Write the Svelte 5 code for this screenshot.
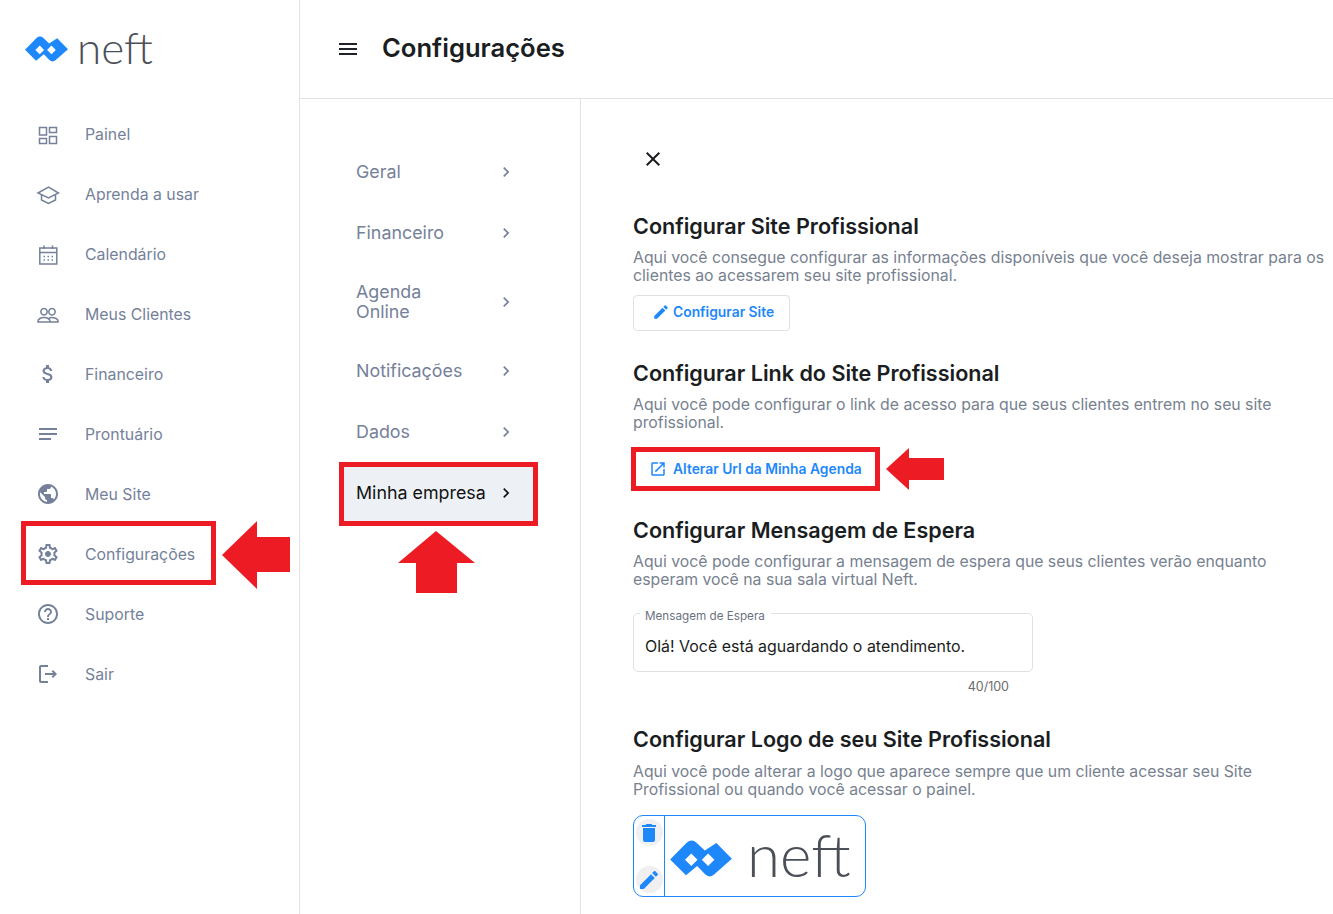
<script lang="ts">
  const logoPath =
    "M0 59 L50 8 Q65 -5 80 8 L105 32 L140 9 L187 57 L135 103 Q120 118 105 103 L82 79 L48 107 Z M45 60 L64 41 L83 60 L64 79 Z M96 60 L115 41 L134 60 L115 79 Z";

  const edit = "M3 17.25V21h3.75L17.81 9.94l-3.75-3.75L3 17.25zM20.71 7.04c.39-.39.39-1.02 0-1.41l-2.34-2.34c-.39-.39-1.02-.39-1.41 0l-1.83 1.83 3.75 3.75 1.83-1.83z";
  const chevron = "M8.59 16.59L13.17 12 8.59 7.41 10 6l6 6-6 6z";

  const menu = [
    { label: "Painel", line: "M3.500 5.500h7v7.500h-7z M13.500 5.500h7v5h-7z M3.500 16.500h7v5h-7z M13.500 14.500h7v7h-7z" },
    { label: "Aprenda a usar", line: "M2 11 L12.500 5 L22.500 11 L12.500 16 Z M5.500 13 V18 L12.500 21.500 L19.500 18 V13" },
    { label: "Calendário", line: "M3.800 6h17v16h-17z M3.800 10.500h17 M8 3.500v3.500 M16.500 3.500v3.500 M7.500 14.500h1.500 M11.500 14.500h1.500 M15.500 14.500h1.500 M7.500 18h1.500 M11.500 18h1.500 M15.500 18h1.500" },
    { label: "Meus Clientes", line: "M8 6.500a3.200 3.200 0 1 0 .01 0z M16 6.500a3.200 3.200 0 1 0 .01 0z M2 20v-1c0-2 3-3.500 6-3.500s6 1.500 6 3.500v1z M13 16c3.500-1.200 9 .3 9 3v1h-8" },
    { label: "Financeiro", d: "M11.8 10.9c-2.27-.59-3-1.2-3-2.15 0-1.09 1.01-1.85 2.7-1.85 1.78 0 2.44.85 2.5 2.1h2.21c-.07-1.72-1.12-3.3-3.21-3.81V3h-3v2.16c-1.94.42-3.5 1.68-3.5 3.61 0 2.31 1.91 3.46 4.7 4.13 2.5.6 3 1.48 3 2.41 0 .69-.49 1.79-2.7 1.79-2.06 0-2.87-.92-2.98-2.1h-2.2c.12 2.19 1.76 3.42 3.68 3.83V21h3v-2.15c1.95-.37 3.5-1.5 3.5-3.55 0-2.84-2.43-3.81-4.7-4.4z" },
    { label: "Prontuário", d: "M21 11.01L3 11v2h18zM3 16h12v2H3zM21 6H3v2.01L21 8z" },
    { label: "Meu Site", d: "M12 2C6.48 2 2 6.48 2 12s4.48 10 10 10 10-4.48 10-10S17.52 2 12 2zm-1 17.93c-3.95-.49-7-3.85-7-7.93 0-.62.08-1.21.21-1.79L9 15v1c0 1.1.9 2 2 2v1.93zm6.9-2.54c-.26-.81-1-1.39-1.9-1.39h-1v-3c0-.55-.45-1-1-1H8v-2h2c.55 0 1-.45 1-1V7h2c1.1 0 2-.9 2-2v-.41c2.93 1.19 5 4.06 5 7.41 0 2.08-.8 3.97-2.1 5.39z" },
    { label: "Configurações", marked: true, d: "M19.43 12.98c.04-.32.07-.64.07-.98 0-.34-.03-.66-.07-.98l2.11-1.65c.19-.15.24-.42.12-.64l-2-3.46c-.09-.16-.26-.25-.44-.25-.06 0-.12.01-.17.03l-2.49 1c-.52-.4-1.08-.73-1.69-.98l-.38-2.65C14.46 2.18 14.25 2 14 2h-4c-.25 0-.46.18-.49.42l-.38 2.65c-.61.25-1.17.59-1.69.98l-2.49-1c-.06-.02-.12-.03-.18-.03-.17 0-.34.09-.43.25l-2 3.46c-.13.22-.07.49.12.64l2.11 1.65c-.04.32-.07.65-.07.98 0 .33.03.66.07.98l-2.11 1.65c-.19.15-.24.42-.12.64l2 3.46c.09.16.26.25.44.25.06 0 .12-.01.17-.03l2.49-1c.52.4 1.08.73 1.69.98l.38 2.65c.03.24.24.42.49.42h4c.25 0 .46-.18.49-.42l.38-2.65c.61-.25 1.17-.59 1.69-.98l2.49 1c.06.02.12.03.18.03.17 0 .34-.09.43-.25l2-3.46c.12-.22.07-.49-.12-.64l-2.11-1.65zm-1.98-1.71c.04.31.05.52.05.73 0 .21-.02.43-.05.73l-.14 1.13.89.7 1.08.84-.7 1.21-1.27-.51-1.04-.42-.9.68c-.43.32-.84.56-1.25.73l-1.06.43-.16 1.13-.2 1.35h-1.4l-.19-1.35-.16-1.13-1.06-.43c-.43-.18-.83-.41-1.23-.71l-.91-.7-1.06.43-1.27.51-.7-1.21 1.08-.84.89-.7-.14-1.13c-.03-.31-.05-.54-.05-.74s.02-.43.05-.73l.14-1.13-.89-.7-1.08-.84.7-1.21 1.27.51 1.04.42.9-.68c.43-.32.84-.56 1.25-.73l1.06-.43.16-1.13.2-1.35h1.39l.19 1.35.16 1.13 1.06.43c.43.18.83.41 1.23.71l.91.7 1.06-.43 1.27-.51.7 1.21-1.07.85-.89.7.14 1.13zM12 9c-1.660 0-3 1.340-3 3s1.340 3 3 3 3-1.340 3-3-1.340-3-3-3z" },
    { label: "Suporte", d: "M11 18h2v-2h-2v2zm1-16C6.48 2 2 6.48 2 12s4.48 10 10 10 10-4.48 10-10S17.52 2 12 2zm0 18c-4.41 0-8-3.59-8-8s3.59-8 8-8 8 3.59 8 8-3.59 8-8 8zm0-14c-2.21 0-4 1.79-4 4h2c0-1.1.9-2 2-2s2 .9 2 2c0 2-3 1.75-3 5h2c0-2.25 3-2.5 3-5 0-2.21-1.79-4-4-4z" },
    { label: "Sair", d: "M17 8l-1.41 1.41L17.17 11H9v2h8.17l-1.58 1.58L17 16l4-4-4-4zM5 5h7V3H5c-1.1 0-2 .9-2 2v14c0 1.1.9 2 2 2h7v-2H5V5z" }
  ];

  const tabs = [
    { label: "Geral" },
    { label: "Financeiro" },
    { label: "Agenda Online", two: true },
    { label: "Notificações" },
    { label: "Dados" },
    { label: "Minha empresa", active: true }
  ];
</script>

<div class="page">
  <aside class="sidebar">
    <div class="brand">
      <svg class="mark" viewBox="0 0 187 112"><path fill-rule="evenodd" d={logoPath} /></svg>
      <span class="wordmark">neft</span>
    </div>
    <nav class="menu">
      {#each menu as item}
        <div class="menu-item" class:boxed={item.marked}>
          <svg class="icon" viewBox="0 0 24 24">
            {#if item.line}
              <path class="stroked" d={item.line} />
            {:else}
              <path d={item.d} />
            {/if}
          </svg>
          <span>{item.label}</span>
          {#if item.marked}
            <svg class="arrow arrow-menu" viewBox="0 0 68 68"><path d="M0 34 L35 0 V16 H68 V51 H35 V68 Z" /></svg>
          {/if}
        </div>
      {/each}
    </nav>
  </aside>

  <div class="main">
    <header class="topbar">
      <svg class="burger" viewBox="0 0 24 24"><path d="M3 18h18v-2H3v2zm0-5h18v-2H3v2zm0-7v2h18V6H3z" /></svg>
      <h1>Configurações</h1>
    </header>

    <div class="columns">
      <nav class="tabs">
        {#each tabs as tab}
          <div class="tab" class:two={tab.two} class:active={tab.active}>
            <span>{tab.label}</span>
            <svg class="chevron" viewBox="0 0 24 24"><path d={chevron} /></svg>
            {#if tab.active}
              <svg class="arrow arrow-tab" viewBox="0 0 77 62"><path d="M38 0 L77 32 H59 V62 H18 V32 H0 Z" /></svg>
            {/if}
          </div>
        {/each}
      </nav>

      <section class="content">
        <svg class="close" viewBox="0 0 24 24"><path d="M19 6.410L17.590 5 12 10.590 6.410 5 5 6.410 10.590 12 5 17.590 6.410 19 12 13.410 17.590 19 19 17.590 13.410 12z" /></svg>

        <h2 class="first">Configurar Site Profissional</h2>
        <p>Aqui você consegue configurar as informações disponíveis que você deseja mostrar para os clientes ao acessarem seu site profissional.</p>
        <button class="btn outlined">
          <svg viewBox="0 0 24 24"><path d={edit} /></svg>
          Configurar Site
        </button>

        <h2>Configurar Link do Site Profissional</h2>
        <p>Aqui você pode configurar o link de acesso para que seus clientes entrem no seu site profissional.</p>
        <button class="btn boxed link">
          <svg viewBox="0 0 24 24"><path d="M19 19H5V5h7V3H5c-1.110 0-2 .9-2 2v14c0 1.100.89 2 2 2h14c1.100 0 2-.9 2-2v-7h-2v7zM14 3v2h3.590l-9.830 9.830 1.410 1.410L19 6.410V10h2V3h-7z" /></svg>
          Alterar Url da Minha Agenda
          <svg class="arrow arrow-link" viewBox="0 0 58 42"><path d="M0 21 L23 0 V10 H58 V32 H23 V42 Z" /></svg>
        </button>

        <h2 class="after-link">Configurar Mensagem de Espera</h2>
        <p>Aqui você pode configurar a mensagem de espera que seus clientes verão enquanto esperam você na sua sala virtual Neft.</p>
        <fieldset class="field">
          <legend>Mensagem de Espera</legend>
          <span>Olá! Você está aguardando o atendimento.</span>
        </fieldset>
        <div class="counter">40/100</div>

        <h2 class="after-field">Configurar Logo de seu Site Profissional</h2>
        <p class="logo-text">Aqui você pode alterar a logo que aparece sempre que um cliente acessar seu Site Profissional ou quando você acessar o painel.</p>
        <div class="logo-box">
          <div class="logo-tools">
            <span class="round"><svg viewBox="0 0 24 24"><path d="M6 19c0 1.100.9 2 2 2h8c1.100 0 2-.9 2-2V7H6v12zM19 4h-3.500l-1-1h-5l-1 1H5v2h14V4z" /></svg></span>
            <span class="round"><svg viewBox="0 0 24 24"><path d={edit} /></svg></span>
          </div>
          <div class="logo-preview">
            <svg class="mark" viewBox="0 0 187 112"><path fill-rule="evenodd" d={logoPath} /></svg>
            <span class="wordmark">neft</span>
          </div>
        </div>
      </section>
    </div>
  </div>
</div>

<style>
  :global(body) {
    margin: 0;
    background: #fff;
    font-family: Inter, "Liberation Sans", sans-serif;
  }
  .page {
    display: flex;
    width: 1333px;
    height: 914px;
    overflow: hidden;
  }
  .sidebar {
    width: 299px;
    flex: none;
    border-right: 1px solid #e1e3e6;
  }
  .brand {
    display: flex;
    align-items: center;
    height: 104px;
    padding: 0 0 6px 25px;
    box-sizing: border-box;
  }
  .mark {
    width: 43px;
    height: 26px;
    fill: #1e88fb;
    flex: none;
  }
  .wordmark {
    font-family: Lato, sans-serif;
    font-weight: 300;
    font-size: 44px;
    line-height: 44px;
    color: #4b5058;
    margin: 0 0 4px 9px;
  }
  .menu {
    padding-left: 26px;
  }
  .menu-item {
    position: relative;
    display: flex;
    align-items: center;
    gap: 25px;
    width: 185px;
    height: 60px;
    padding-left: 10px;
    box-sizing: border-box;
    font-size: 15.85px;
    color: #75819a;
  }
  .icon {
    width: 24px;
    height: 24px;
    flex: none;
    fill: #75819a;
  }
  .stroked {
    fill: none;
    stroke: #75819a;
    stroke-width: 1.5;
  }
  .menu-item.boxed::after {
    content: "";
    position: absolute;
    inset: -3px -5px -1px;
    border: 5px solid #ed1c24;
  }
  .arrow {
    position: absolute;
    fill: #ed1c24;
  }
  .arrow-menu {
    left: 196px;
    top: -3px;
    width: 68px;
    height: 68px;
  }
  .main {
    flex: 1;
    min-width: 0;
  }
  .topbar {
    display: flex;
    align-items: center;
    gap: 22px;
    height: 98px;
    padding-left: 36px;
    border-bottom: 1px solid #e1e3e6;
  }
  .burger {
    width: 24px;
    height: 24px;
    fill: #1f2329;
  }
  h1 {
    margin: 0 0 4px;
    font-size: 25.6px;
    font-weight: 600;
    color: #1a1d21;
  }
  .columns {
    display: flex;
    height: 815px;
  }
  .tabs {
    width: 281px;
    flex: none;
    box-sizing: border-box;
    padding: 43px 47px 0 44px;
    border-right: 1px solid #e1e3e6;
  }
  .tab {
    position: relative;
    display: flex;
    align-items: center;
    justify-content: space-between;
    padding: 20px 17px 20px 12px;
    margin-bottom: 1px;
    font-size: 17.85px;
    line-height: 20px;
    color: #75819a;
  }
  .chevron {
    width: 20px;
    height: 20px;
    fill: #75819a;
    flex: none;
  }
  .tab.two {
    padding-top: 18px;
    padding-bottom: 18px;
  }
  .tab.two span {
    width: 80px;
  }
  .tab.active {
    background: #edf1f5;
    color: #111;
  }
  .tab.active .chevron {
    fill: #111;
  }
  .tab.active::after {
    content: "";
    position: absolute;
    inset: -1px -5px -3px;
    border: 5px solid #ed1c24;
  }
  .arrow-tab {
    left: 54px;
    top: 68px;
    width: 77px;
    height: 62px;
  }
  .content {
    flex: 1;
    min-width: 0;
    padding-left: 52px;
  }
  .close {
    display: block;
    width: 24px;
    height: 24px;
    margin: 48px 0 0 8px;
    fill: #1a1d21;
  }
  h2 {
    margin: 28px 0 0;
    font-size: 21.55px;
    line-height: 28px;
    font-weight: 600;
    color: #1a1d21;
  }
  h2.first {
    margin-top: 41px;
  }
  h2.after-link {
    margin-top: 30px;
  }
  h2.after-field {
    margin-top: 31px;
  }
  p {
    margin: 9px 0 0;
    font-size: 15.8px;
    line-height: 18px;
    color: #77818f;
  }
  p.logo-text {
    margin-top: 10px;
  }
  .btn {
    position: relative;
    display: flex;
    align-items: center;
    gap: 3px;
    margin-top: 10px;
    height: 36px;
    background: #fff;
    font-family: inherit;
    font-size: 13.85px;
    font-weight: 600;
    color: #1e88fb;
    padding: 0;
  }
  .btn svg {
    width: 18px;
    height: 18px;
    fill: #1e88fb;
    flex: none;
  }
  .outlined {
    width: 157px;
    padding: 0 0 3px 18px;
    border: 1px solid #dfe1e4;
    border-radius: 4px;
  }
  .link {
    width: 239px;
    margin: 20px 0 0 3px;
    padding-left: 13px;
    gap: 6px;
    border: 0;
    height: 34px;
  }
  .link.boxed::after {
    content: "";
    position: absolute;
    inset: -5px;
    border: 5px solid #ed1c24;
  }
  .btn .arrow-link {
    left: 250px;
    top: -4px;
    width: 58px;
    height: 42px;
    fill: #ed1c24;
  }
  .field {
    margin: 14px 0 0;
    width: 400px;
    height: 69px;
    box-sizing: border-box;
    padding: 14px 11px 0;
    border: 1px solid #dfe1e4;
    border-radius: 5px;
    font-size: 15.95px;
    color: #1a1d21;
  }
  .field legend {
    font-size: 11.7px;
    line-height: 14px;
    margin-left: -5px;
    padding: 6px 6px 0 5px;
    color: #6b7280;
  }
  .counter {
    width: 376px;
    margin-top: 7px;
    font-size: 12.5px;
    line-height: 15px;
    text-align: right;
    color: #6b6b6b;
  }
  .logo-box {
    display: flex;
    width: 233px;
    height: 82px;
    margin-top: 16px;
    box-sizing: border-box;
    border: 1px solid #1e88fb;
    border-radius: 10px;
  }
  .logo-tools {
    width: 31px;
    flex: none;
    display: flex;
    flex-direction: column;
    justify-content: space-between;
    align-items: center;
    padding: 3px 0;
    box-sizing: border-box;
    border-right: 1px solid #1e88fb;
  }
  .round {
    display: flex;
    align-items: center;
    justify-content: center;
    width: 27px;
    height: 27px;
    border-radius: 50%;
    background: #f0f0f0;
  }
  .round svg {
    width: 24px;
    height: 24px;
    fill: #1e88fb;
  }
  .logo-preview {
    display: flex;
    align-items: center;
    padding-left: 5px;
  }
  .logo-preview .mark {
    width: 62px;
    height: 37px;
    margin-top: 4px;
  }
  .logo-preview .wordmark {
    font-size: 60px;
    line-height: 60px;
    margin: 0 0 4px 15px;
  }
</style>
